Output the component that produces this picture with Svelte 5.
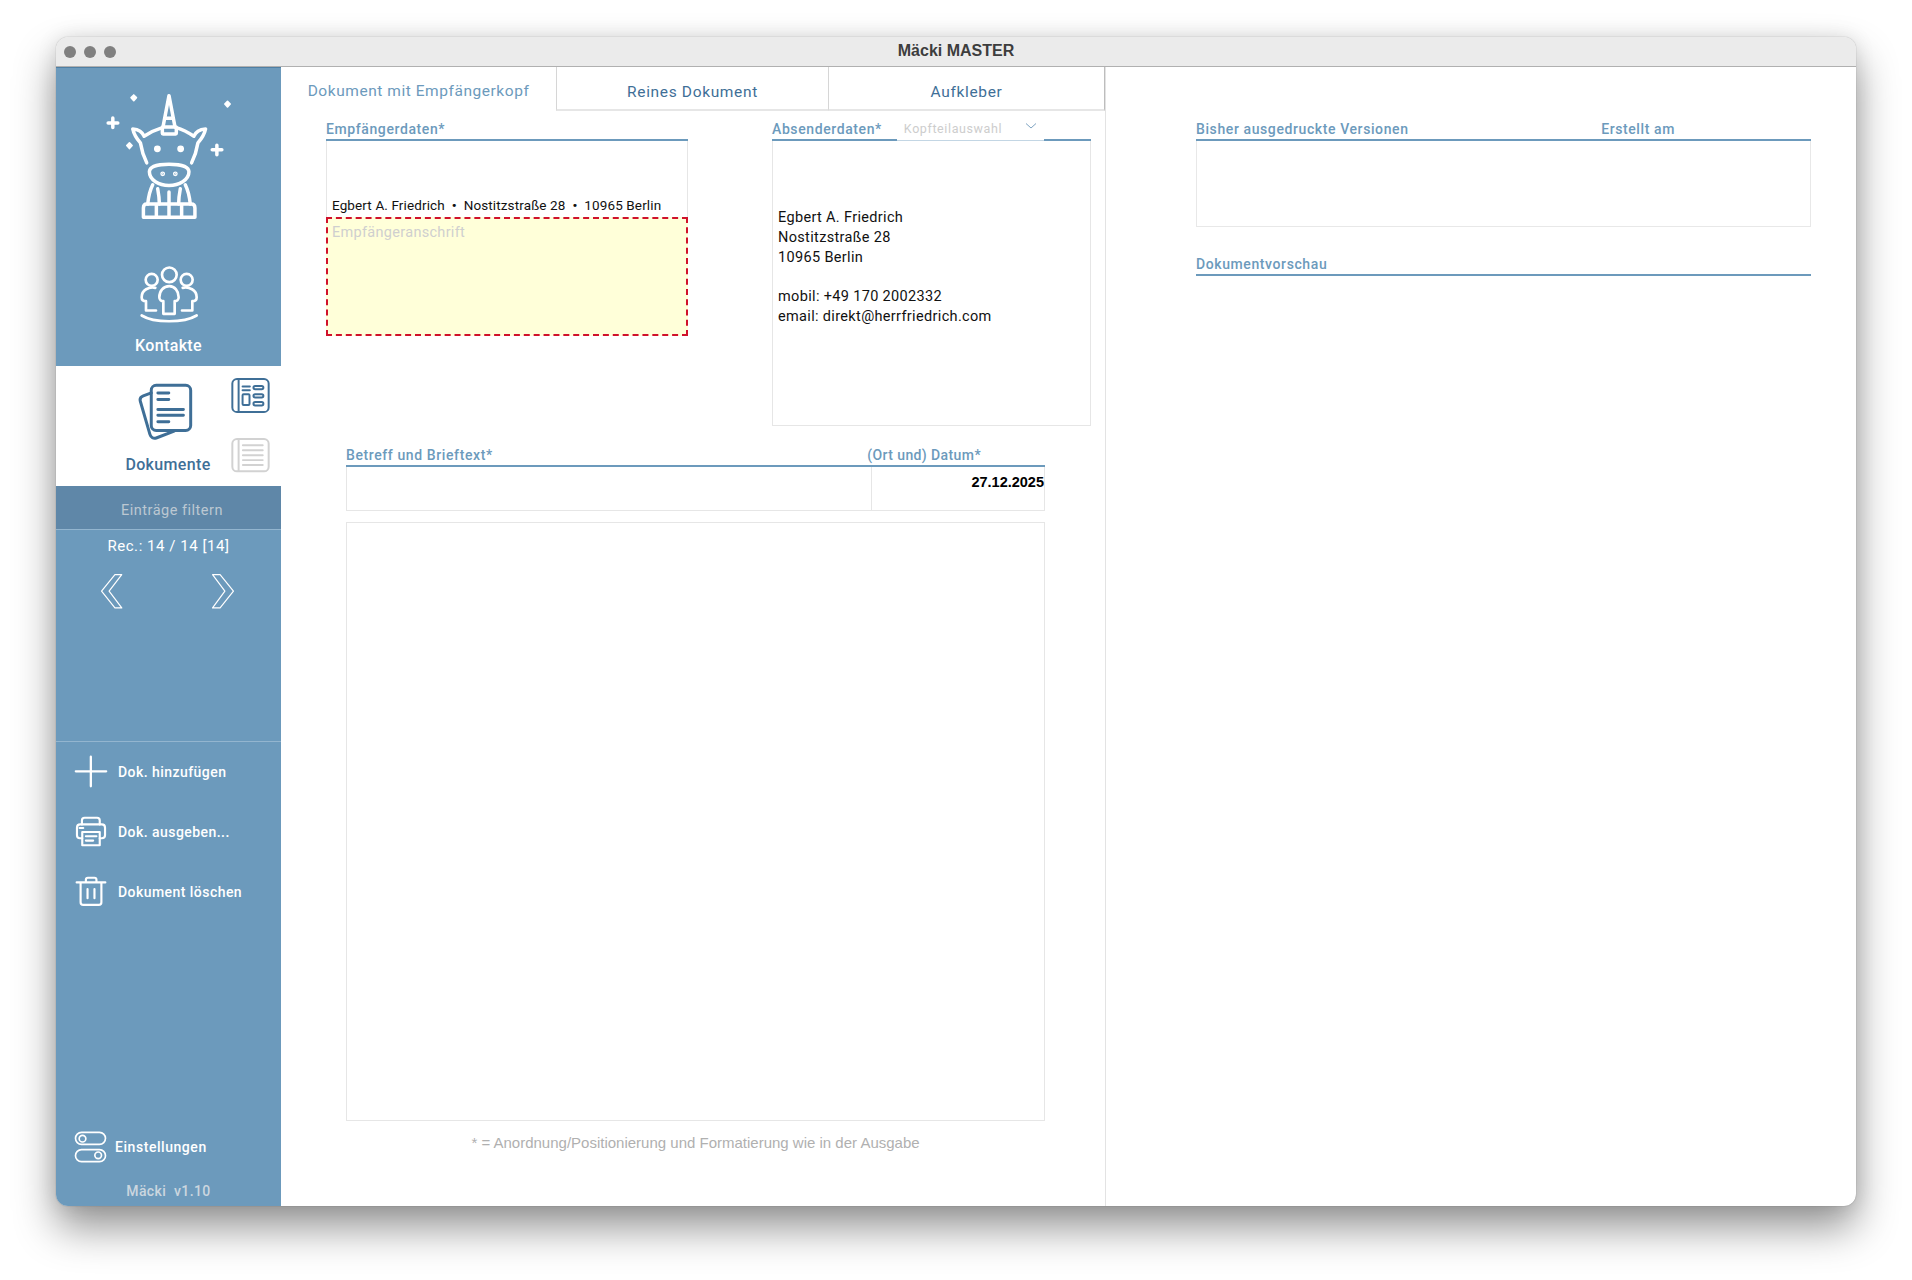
<script lang="ts">
	const senderLines = [
		'Egbert A. Friedrich',
		'Nostitzstraße 28',
		'10965 Berlin',
		'',
		'mobil: +49 170 2002332',
		'email: direkt@herrfriedrich.com'
	];
	const tabs = ['Dokument mit Empfängerkopf', 'Reines Dokument', 'Aufkleber'];
</script>

<div class="page">
	<div class="window">
		<header class="titlebar">
			<div class="lights"><i></i><i></i><i></i></div>
			<span class="title">Mäcki MASTER</span>
		</header>
		<div class="body">
			<aside class="sidebar">
				<section class="nav-top">
					<svg class="logo" viewBox="190 215 390 385" fill="none" stroke="#fff" stroke-width="10.5" stroke-linecap="round" stroke-linejoin="round">
						<path d="M367 320 L385 226 L403 320 M372 294 H398" />
						<rect x="365" y="320" width="42" height="21" rx="2" />
						<path d="M365 322 C345 328 325 338 310 348 C305 335 292 327 276 326 C280 345 290 358 299 368 C303 392 310 412 318 428" />
						<path d="M407 322 C427 328 445 338 460 348 C465 335 478 327 495 326 C491 345 481 358 472 368 C468 392 461 412 453 428" />
						<circle cx="350" cy="386" r="5" fill="#fff" />
						<circle cx="420" cy="386" r="5" fill="#fff" />
						<path d="M326 455 C326 440 350 432 385 432 C420 432 445 440 445 455 C445 480 415 496 385 496 C355 496 326 480 326 455 Z" />
						<circle cx="366" cy="461" r="2" fill="#fff" />
						<circle cx="404" cy="461" r="2" fill="#fff" />
						<path d="M336 494 C327 512 323 532 321 552 M351 506 C354 522 356 538 356 552 M385 516 V552 M419 506 C416 522 414 538 414 552 M434 494 C443 512 447 532 449 552" />
						<path d="M318 552 H452 C460 552 463 558 463 564 V592 H308 V564 C308 558 311 552 318 552 Z M347 556 V590 M385 556 V590 M423 556 V590" />
						<path d="M279 224 L287 232 L279 241 L271 232 Z M561 243 L569 251 L561 260 L553 251 Z M266 368 L274 376 L266 385 L258 376 Z" fill="#fff" stroke-width="5" />
						<path d="M216 293 V322 M202 308 H231 M529 375 V404 M515 389 H544" />
					</svg>
					<svg class="contacts" viewBox="295 732 180 176" fill="none" stroke="#fff" stroke-width="8" stroke-linecap="round" stroke-linejoin="round">
						<circle cx="386" cy="761" r="22" />
						<circle cx="333" cy="776" r="18" />
						<circle cx="438" cy="776" r="18" />
						<path d="M386 795 C368 795 356 810 356 828 C356 836 362 840 368 840 V878 H402 V840 C408 840 414 836 414 828 C414 810 402 795 386 795 Z" />
						<path d="M344 800 C325 796 303 806 303 828 C303 836 309 840 316 840 V868 H346 M426 800 C445 796 468 806 468 828 C468 836 462 840 455 840 V868 H424" />
						<path d="M303 883 C340 906 430 906 468 883" />
					</svg>
					<span class="nav-label">Kontakte</span>
				</section>

				<section class="nav-active">
					<div class="doc-main">
						<svg class="doc-icon" viewBox="295 70 166 175" fill="none" stroke="#3f6f97" stroke-width="9" stroke-linecap="round" stroke-linejoin="round">
							<rect x="335" y="77" width="119" height="136" rx="15" />
							<path d="M355 100 H388 M355 120 H388 M355 150 H432 M355 167 H432 M355 187 H388" />
							<path d="M335 100 L311 109 C303 112 300 118 302 125 L331 225 C334 235 342 239 350 236 L404 215" />
						</svg>
						<span class="nav-label dark">Dokumente</span>
					</div>
					<div class="doc-views">
						<svg viewBox="575 54 116 106" fill="none" stroke="#3f6f97" stroke-width="6" stroke-linecap="round" stroke-linejoin="round">
							<rect x="578" y="57" width="110" height="100" rx="14" />
							<path d="M597 58 V156 M609 80 H631 M609 91 H631" />
							<rect x="609" y="103" width="21" height="33" rx="3" />
							<rect x="642" y="78" width="30" height="10" rx="5" />
							<rect x="642" y="103" width="30" height="10" rx="5" />
							<rect x="642" y="127" width="30" height="10" rx="5" />
						</svg>
						<svg viewBox="575 236 116 106" fill="none" stroke="#d2d2d2" stroke-width="6" stroke-linecap="round" stroke-linejoin="round">
							<rect x="578" y="239" width="110" height="98" rx="14" />
							<path d="M597 240 V336 M610 258 H670 M610 273 H670 M610 288 H670 M610 303 H670 M610 318 H670" />
						</svg>
					</div>
				</section>

				<div class="filter">Einträge filtern</div>
				<div class="rec">Rec.: 14 / 14 [14]</div>
				<div class="pager">
					<svg viewBox="180 640 75 108" fill="none" stroke="#fff" stroke-width="3.5" stroke-linejoin="round">
						<path d="M246 645 H226 L187 693 L226 742 H246 L209 693 Z" />
					</svg>
					<svg viewBox="515 640 75 108" fill="none" stroke="#fff" stroke-width="3.5" stroke-linejoin="round">
						<path d="M522 645 H544 L583 693 L544 742 H522 L558 693 Z" />
					</svg>
				</div>

				<div class="actions">
					<div class="action">
						<svg viewBox="100 42 103 101" fill="none" stroke="#fff" stroke-width="7" stroke-linecap="round">
							<path d="M105 92 H198 M151 47 V138" />
						</svg>
						<span>Dok. hinzufügen</span>
					</div>
					<div class="action">
						<svg viewBox="100 226 103 95" fill="none" stroke="#fff" stroke-width="6.5" stroke-linecap="round" stroke-linejoin="round">
							<path d="M124 252 V240 C124 235 127 232 132 232 H170 C175 232 178 235 178 240 V252" />
							<path d="M125 294 H118 C112 294 109 290 109 285 V262 C109 256 113 252 119 252 H184 C190 252 194 256 194 262 V285 C194 290 190 294 184 294 H178" />
							<path d="M125 275 H178 V315 H125 Z M136 288 H168 M136 301 H158 M117 263 H128" />
						</svg>
						<span>Dok. ausgeben...</span>
					</div>
					<div class="action">
						<svg viewBox="100 406 103 95" fill="none" stroke="#fff" stroke-width="6.5" stroke-linecap="round" stroke-linejoin="round">
							<path d="M108 426 H195 M136 424 V418 C136 414 139 412 142 412 H162 C165 412 168 414 168 418 V424" />
							<path d="M120 428 V486 C120 491 123 494 128 494 H175 C180 494 183 491 183 486 V428 M141 446 V474 M162 446 V474" />
						</svg>
						<span>Dokument löschen</span>
					</div>
				</div>

				<div class="settings">
					<svg viewBox="98 60 98 96" fill="none" stroke="#fff" stroke-width="5">
						<rect x="102" y="64" width="90" height="36" rx="18" />
						<rect x="102" y="116" width="90" height="36" rx="18" />
						<circle cx="123" cy="83" r="10" />
						<circle cx="170" cy="133" r="10" />
					</svg>
					<span>Einstellungen</span>
				</div>
				<div class="version">Mäcki&nbsp; v1.10</div>
			</aside>

			<main class="editor">
				<nav class="tabs">
					{#each tabs as tab, i}
						<div class="tab" class:current={i === 0}>{tab}</div>
					{/each}
				</nav>

				<div class="address-row">
					<section class="recipient">
						<h3 class="head">Empfängerdaten*</h3>
						<div class="return-line">Egbert A. Friedrich &nbsp;<b>•</b>&nbsp; Nostitzstraße 28 &nbsp;<b>•</b>&nbsp; 10965 Berlin</div>
						<div class="recipient-field">Empfängeranschrift</div>
					</section>
					<section class="sender">
						<h3 class="head">
							Absenderdaten*
							<span class="picker">
								Kopfteilauswahl
								<svg viewBox="0 0 12 8" fill="none" stroke="#7fa4c2" stroke-width="1"><path d="M1 1.5 L6 6 L11 1.5" /></svg>
							</span>
						</h3>
						<div class="sender-box">
							{#each senderLines as line}
								<div class="sender-line">{line}</div>
							{/each}
						</div>
					</section>
				</div>

				<section class="letter">
					<div class="letter-head">
						<h3>Betreff und Brieftext*</h3>
						<h3 class="date-head">(Ort und) Datum*</h3>
					</div>
					<div class="subject-row">
						<div class="subject"></div>
						<div class="date">27.12.2025</div>
					</div>
					<div class="letter-body"></div>
					<p class="footnote">* = Anordnung/Positionierung und Formatierung wie in der Ausgabe</p>
				</section>
			</main>

			<section class="versions">
				<h3 class="head split"><span>Bisher ausgedruckte Versionen</span><span>Erstellt am</span></h3>
				<div class="versions-box"></div>
				<h3 class="head preview">Dokumentvorschau</h3>
			</section>
		</div>
	</div>
</div>

<style>
	:global(body) {
		margin: 0;
		background: #fff;
	}
	.page {
		width: 1912px;
		height: 1280px;
		box-sizing: border-box;
		padding: 37px 56px 0 56px;
		font-family: Roboto, 'Liberation Sans', sans-serif;
		overflow: hidden;
	}
	.window {
		height: 1169px;
		border-radius: 12px;
		background: #fff;
		display: flex;
		flex-direction: column;
		overflow: hidden;
		box-shadow: 0 0 1px rgba(0, 0, 0, 0.45), 0 22px 42px rgba(0, 0, 0, 0.42), 0 0 20px rgba(0, 0, 0, 0.1);
	}
	.titlebar {
		flex: 0 0 30px;
		background: #ebebeb;
		position: relative;
		display: flex;
		align-items: center;
		justify-content: center;
		border-bottom: 1px solid #b0b0b0;
		padding-bottom: 2px;
		box-sizing: border-box;
	}
	.lights {
		position: absolute;
		left: 8px;
		top: 9px;
		display: flex;
		gap: 8px;
	}
	.lights i {
		width: 12px;
		height: 12px;
		border-radius: 50%;
		background: #808080;
	}
	.title {
		font: bold 16px 'Liberation Sans', sans-serif;
		color: #3d3d3d;
	}
	.body {
		flex: 1;
		display: flex;
		min-height: 0;
	}

	/* sidebar */
	.sidebar {
		width: 225px;
		flex: none;
		background: #6c9abc;
		display: flex;
		flex-direction: column;
		color: #fff;
		box-shadow: inset 0 1px 0 #4f7fa3;
	}
	.nav-top {
		height: 299px;
		display: flex;
		flex-direction: column;
		align-items: center;
		flex: none;
	}
	.logo {
		width: 130px;
		height: 128px;
		margin-top: 25px;
		flex: none;
	}
	.contacts {
		width: 60px;
		height: 59px;
		margin-top: 45px;
		flex: none;
	}
	.nav-label {
		font-size: 16px;
		font-weight: 500;
		letter-spacing: 0.35px;
		line-height: 20px;
		margin-top: 12px;
	}
	.nav-label.dark {
		color: #3f6f97;
		margin-top: 14px;
	}
	.nav-active {
		height: 120px;
		flex: none;
		background: #fff;
		display: grid;
		grid-template-columns: 175px 37px;
	}
	.doc-main {
		display: flex;
		flex-direction: column;
		align-items: center;
		padding: 17px 0 0 49px;
		box-sizing: border-box;
	}
	.doc-icon {
		width: 55px;
		height: 58px;
		flex: none;
		margin-right: 5px;
	}
	.doc-views {
		display: flex;
		flex-direction: column;
		gap: 25px;
		padding-top: 12px;
	}
	.doc-views svg {
		width: 39px;
		height: 35px;
	}
	.filter {
		height: 44px;
		flex: none;
		box-sizing: border-box;
		background: #5f87a8;
		border-bottom: 1px solid #93b5cf;
		color: #bcc8d2;
		font-size: 14.5px;
		letter-spacing: 0.5px;
		display: flex;
		align-items: center;
		justify-content: center;
		padding: 5px 0 0 7px;
	}
	.rec {
		font-size: 15px;
		letter-spacing: 0.55px;
		text-align: center;
		line-height: 20px;
		margin-top: 6px;
		flex: none;
	}
	.pager {
		display: flex;
		justify-content: space-between;
		padding: 17px 45px 0 43px;
		height: 36px;
		flex: none;
	}
	.pager svg {
		width: 26px;
		height: 37px;
	}
	.actions {
		margin-top: 132px;
		border-top: 1px solid #93b5cf;
		padding-top: 13px;
		padding-left: 18px;
		display: flex;
		flex-direction: column;
		gap: 27px;
		flex: none;
	}
	.action {
		display: flex;
		align-items: center;
		gap: 10px;
		height: 33px;
		font-size: 14px;
		font-weight: 500;
		letter-spacing: 0.45px;
	}
	.action svg {
		width: 34px;
		height: 33px;
		flex: none;
	}
	.settings {
		margin-top: auto;
		padding-left: 18px;
		display: flex;
		align-items: center;
		gap: 8px;
		font-size: 14px;
		font-weight: 500;
		letter-spacing: 0.55px;
	}
	.settings svg {
		width: 33px;
		height: 32px;
		flex: none;
	}
	.version {
		text-align: center;
		color: #cbd6df;
		font-size: 14px;
		font-weight: 500;
		letter-spacing: 0.4px;
		line-height: 18px;
		margin: 19px 0 6px;
	}

	/* editor */
	.editor {
		width: 825px;
		flex: none;
		box-sizing: border-box;
		border-right: 1px solid #e3e3e3;
		display: flex;
		flex-direction: column;
	}
	.tabs {
		display: grid;
		grid-template-columns: 275px 272px 277px;
		height: 44px;
		flex: none;
	}
	.tab {
		display: flex;
		align-items: center;
		justify-content: center;
		box-sizing: border-box;
		color: #3f6f97;
		font-size: 15.5px;
		letter-spacing: 0.65px;
		border-left: 1px solid #d6d6d6;
		border-bottom: 2px solid #e6e6e6;
		padding-top: 8px;
	}
	.tab:last-child {
		border-right: 1px solid #bdbdbd;
	}
	.tab.current {
		border: 0;
		color: #6c9abc;
		letter-spacing: 0.55px;
		padding: 4px 0 0 0;
	}
	.head,
	.letter-head h3 {
		margin: 0;
		font-size: 14px;
		font-weight: 500;
		letter-spacing: 0.6px;
		color: #6c9abc;
	}
	.letter-head .date-head {
		letter-spacing: 0.4px;
	}
	.head {
		height: 21px;
		box-sizing: border-box;
		border-bottom: 2px solid #6c9abc;
		line-height: 18px;
		display: flex;
	}
	.address-row {
		display: flex;
		gap: 84px;
		padding: 9px 0 0 45px;
		flex: none;
	}
	.recipient {
		width: 362px;
	}
	.return-line {
		height: 76px;
		box-sizing: border-box;
		border: 1px solid #e6e6e6;
		border-width: 0 1px;
		padding: 55px 0 0 5px;
		font-size: 13.5px;
		letter-spacing: 0.12px;
		line-height: 18px;
		color: #111;
		white-space: nowrap;
	}
	.recipient-field {
		height: 119px;
		box-sizing: border-box;
		background: #ffffd9;
		border: 2px dashed #d0112b;
		padding: 4px 4px;
		color: #cfcfcf;
		font-size: 14.5px;
		letter-spacing: 0.3px;
		line-height: 19px;
	}
	.sender {
		width: 319px;
	}
	.picker {
		display: block;
		box-sizing: border-box;
		color: #cdcdcd;
		font-size: 12.5px;
		font-weight: 400;
		margin: 0 0 -2px 15px;
		padding-left: 7px;
		width: 147px;
		flex: none;
		background: #fff;
		height: 21px;
		border-bottom: 1px solid #c3d6e4;
		position: relative;
	}
	.picker svg {
		width: 12px;
		height: 8px;
		position: absolute;
		left: 128px;
		top: 2px;
	}
	.sender-box {
		height: 285px;
		box-sizing: border-box;
		border: 1px solid #e6e6e6;
		border-top: 0;
		padding: 67px 0 0 5px;
		font-size: 14.5px;
		letter-spacing: 0.34px;
		line-height: 19.75px;
		color: #111;
	}
	.sender-line {
		min-height: 19.75px;
	}
	.letter {
		width: 699px;
		margin: 20px 0 0 65px;
		flex: none;
	}
	.letter-head {
		display: flex;
		justify-content: space-between;
		height: 21px;
		box-sizing: border-box;
		border-bottom: 2px solid #6c9abc;
		line-height: 18px;
		padding-right: 64px;
	}
	.subject-row {
		display: flex;
		height: 44px;
		box-sizing: border-box;
		border: 1px solid #e6e6e6;
		border-top: 0;
	}
	.subject {
		width: 524px;
		border-right: 1px solid #e6e6e6;
	}
	.date {
		flex: 1;
		text-align: right;
		font: bold 14.5px/31px 'Liberation Sans', sans-serif;
		color: #000;
	}
	.letter-body {
		height: 599px;
		box-sizing: border-box;
		border: 1px solid #e6e6e6;
		margin-top: 11px;
	}
	.footnote {
		margin: 13px 0 0;
		text-align: center;
		font: 15px/18px 'Liberation Sans', sans-serif;
		color: #b0b0b0;
	}
	.versions {
		flex: 1;
		padding: 53px 45px 0 90px;
	}
	.head.split {
		justify-content: space-between;
		padding-right: 136px;
	}
	.versions-box {
		height: 86px;
		box-sizing: border-box;
		border: 1px solid #e8e8e8;
		border-top: 0;
	}
	.head.preview {
		margin-top: 28px;
	}
</style>
